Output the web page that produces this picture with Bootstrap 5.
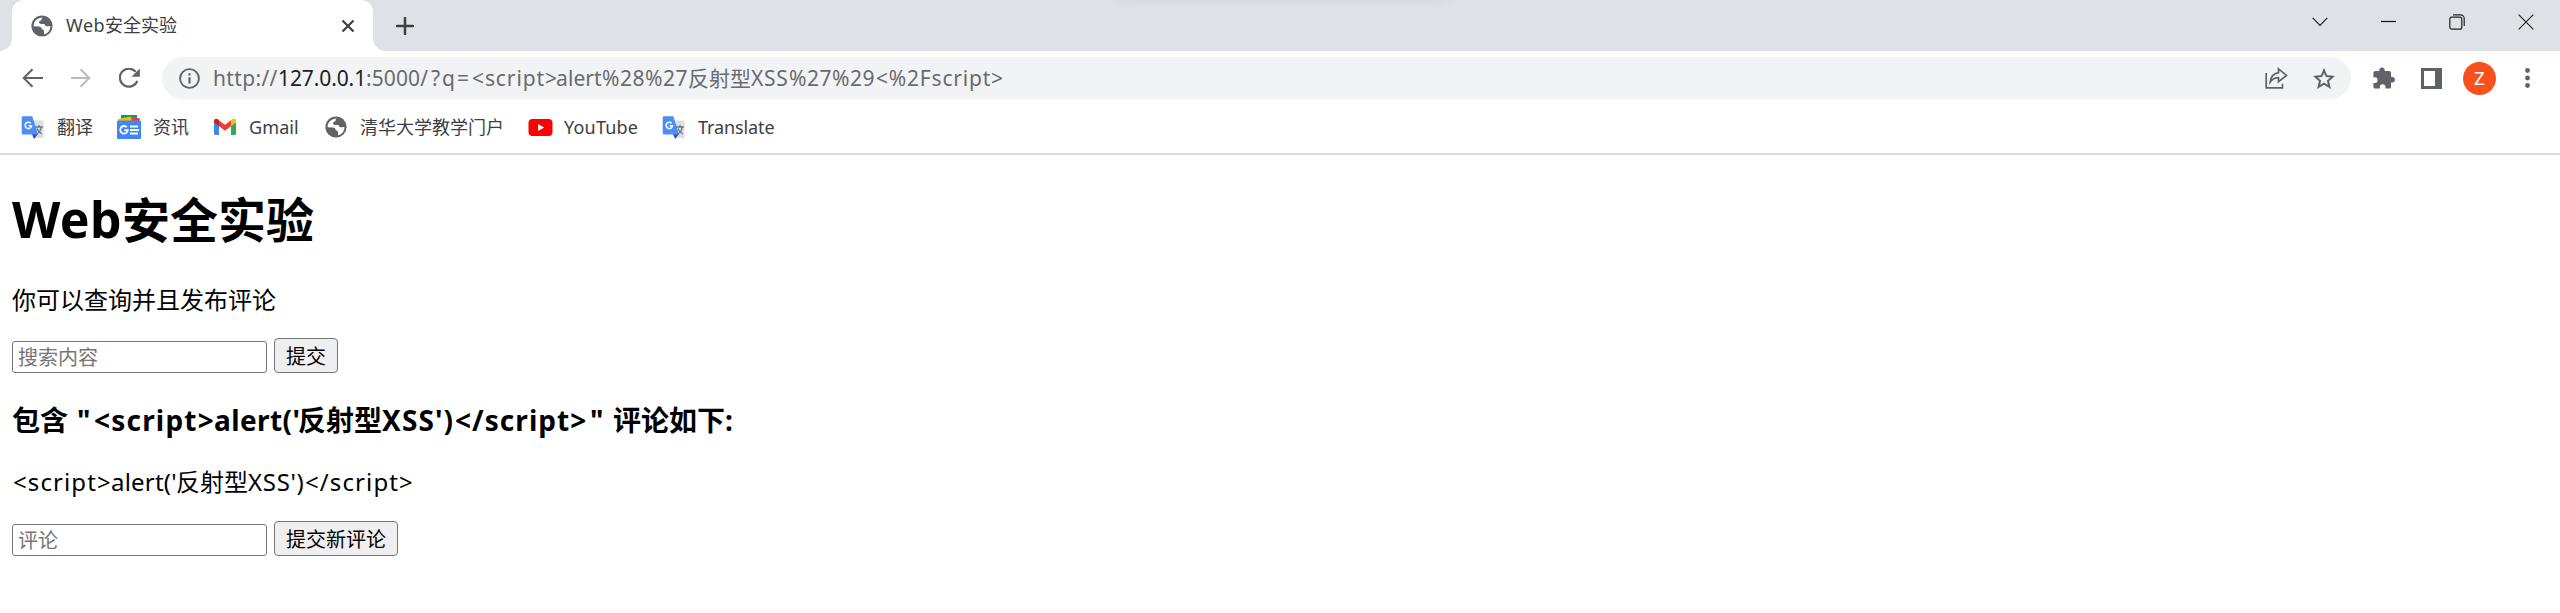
<!DOCTYPE html>
<html lang="zh-CN">
<head>
<meta charset="utf-8">
<title>Web安全实验</title>
<link href="https://cdn.jsdelivr.net/npm/bootstrap@5.3.0/dist/css/bootstrap.min.css" rel="stylesheet">
<style>
body{font-family:"Noto Sans","Noto Sans CJK SC",sans-serif;color:#000;background:#fff;height:613px;overflow:hidden}
svg{display:block;flex:none}
.tabstrip{height:51px;background:#dee1e6;position:relative}
.strip-shade{position:absolute;left:1118px;top:-14px;width:330px;height:12px;box-shadow:0 0 14px rgba(0,0,0,.08)}
.tab-page{width:361px;height:51px;margin-left:12px;padding:0 18px 0 19px;background:#fff;border-radius:12px 12px 0 0;position:relative;font-size:18px;color:#3c4043}
.tab-page::before,.tab-page::after{content:"";position:absolute;bottom:0;width:12px;height:12px}
.tab-page::before{left:-12px;background:radial-gradient(circle at 0 0,transparent 11.5px,#fff 12px)}
.tab-page::after{right:-12px;background:radial-gradient(circle at 100% 0,transparent 11.5px,#fff 12px)}
.tab-name{margin-left:13px}
.win-ctl{gap:53px;padding-right:26px;height:43px}
.toolbar{height:54px;padding:0 30px 0 22px}
.omnibox{height:42px;border-radius:21px;background:#f1f3f4;margin-left:22px;padding:0 16px 0 17px}
.address{font-size:21px;line-height:42px;color:#696b6e;margin-left:13px;white-space:pre}
.address b{font-weight:400;color:#202124}
.seg{display:inline-block;white-space:pre}
.marks{height:50px;border-bottom:2px solid #d9dadb;padding-left:21px;font-size:18px;color:#3c4043}
.marks .item{height:44px;white-space:nowrap}
.avatar{width:33px;height:33px;background:#f8511d;color:#fff;font-size:18px;line-height:33px;font-family:Roboto,sans-serif}
.page{padding:0 12px}
.page h1{font-size:48px;line-height:64px;margin:33px 0 0;font-weight:700;white-space:pre}
.page p{font-size:24px;line-height:32px;margin:0;white-space:pre}
.page h3{font-size:28px;line-height:38px;margin:0;font-weight:700;white-space:pre}
.entry{width:255px;height:32px;border:1px solid #767676;border-radius:3px;padding:0 5px;font-size:20px;line-height:28px;color:#000;background:#fff;outline:0}
.entry::placeholder{color:#757575;opacity:1}
.push{height:35px;border:1px solid #767676;border-radius:4px;background:#efefef;font-size:20px;line-height:36px;padding:0;color:#000;margin-left:7px}
</style>
</head>
<body>
<svg width="0" height="0" class="position-absolute">
<symbol id="globe" viewBox="0 0 22 22"><circle cx="11" cy="11" r="10.6" fill="#5f6368"/><path d="M12 2.6c-1.4.7-1.7 1.4-1.4 2.6-1.8.2-2.8.9-2.5 2.4.2.9 1 1.400 2.300 1.300h3.100c.5 1.700 1.300 2.400 3 2.300l2.900-.2c.1 4-2.300 7-5.800 8.200-.3.1-.6 0-.6-.400v-2c0-1.500-.6-2.300-2.200-2.600-.3-1.800-1.200-2.700-3-2.800L2.600 11.200C2.500 6.300 6.500 2.500 12 2.600z" fill="#fff"/><path d="M3 12.500l3.700 2.800v2c0 .9.8 1.200 2 1.500v.9C5.400 19 3 16 3 12.500z" fill="#5f6368"/></symbol>
<symbol id="gtrans" viewBox="0 0 22 23"><path d="M8 4.500h13a1 1 0 0 1 1 1V21a1 1 0 0 1-1 1H12z" fill="#dcdee0"/><path d="M13.500 11h8M17.500 9v2M15 18.500c2.500-1.500 4.200-4 4.700-7.300M15.500 12.500c.8 2.400 2.500 4.300 4.800 5.500" stroke="#607d8b" stroke-width="1.300" fill="none"/><path d="M10.500 18h6l-4 5z" fill="#3949ab"/><path d="M1.500.3h9.300L16.500 18.500h-15A1.300 1.300 0 0 1 .2 17.200V1.600A1.300 1.300 0 0 1 1.500.3z" fill="#4d8df6"/><path d="M9.200 7.200A3.200 3.200 0 1 0 10 9.700H7" stroke="#fff" stroke-width="1.500" fill="none"/></symbol>
</svg>

<header>
<div class="tabstrip d-flex">
  <div class="strip-shade"></div>
  <div class="tab-page d-flex align-items-center">
    <svg width="22" height="22"><use href="#globe"/></svg>
    <span class="tab-name"><span class="seg" style="width:39px;letter-spacing:.5px">Web</span>安全实验</span>
    <svg class="ms-auto" width="14" height="14" viewBox="0 0 14 14"><path d="M1.500 1.500l11 11M12.500 1.500l-11 11" stroke="#3c4043" stroke-width="2.200"/></svg>
  </div>
  <svg class="align-self-center" style="margin-left:23px" width="18" height="18" viewBox="0 0 18 18"><path d="M9 1v16M1 9h16" stroke="#3c4043" stroke-width="2.500" stroke-linecap="round"/></svg>
  <div class="win-ctl d-flex align-items-center ms-auto">
    <svg width="16" height="10" viewBox="0 0 16 10"><path d="M.7.8L8 8.500 15.300.8" stroke="#222" stroke-width="1.200" fill="none"/></svg>
    <svg width="15" height="3"><path d="M0 1.500h15" stroke="#111" stroke-width="1.200"/></svg>
    <svg width="16" height="16" viewBox="0 0 16 16"><rect x=".8" y="3.200" width="12" height="12" rx="2" fill="none" stroke="#222" stroke-width="1.200"/><path d="M4 .8h7.500a3.700 3.700 0 0 1 3.700 3.700V12" fill="none" stroke="#222" stroke-width="1.200"/></svg>
    <svg width="16" height="16" viewBox="0 0 16 16"><path d="M.7.7l14.600 14.600M15.300.7L.7 15.300" stroke="#222" stroke-width="1.200"/></svg>
  </div>
</div>

<div class="toolbar d-flex align-items-center">
  <svg width="22" height="20" viewBox="0 0 22 20"><path d="M21 10H2.500M10.500 1.200L1.700 10l8.800 8.800" stroke="#5f6368" stroke-width="2" fill="none"/></svg>
  <svg style="margin-left:27px" width="20" height="20" viewBox="0 0 20 20"><path d="M0 10h18M9.500 1.200l8.800 8.800-8.800 8.800" stroke="#babcbe" stroke-width="2" fill="none"/></svg>
  <svg style="margin-left:28px" width="21" height="20" viewBox="0 0 21 20"><path d="M18.300 12.800a9 9 0 1 1-1.600-9" stroke="#5f6368" stroke-width="2.200" fill="none"/><path d="M20.800.4v8.300h-8.300z" fill="#5f6368"/></svg>
  <div class="omnibox d-flex align-items-center flex-grow-1">
    <svg width="21" height="21" viewBox="0 0 21 21"><circle cx="10.500" cy="10.500" r="9.400" stroke="#5f6368" stroke-width="1.900" fill="none"/><path d="M10.500 9.200v6.300M10.500 5.300v2.300" stroke="#5f6368" stroke-width="2.200"/></svg>
    <div class="address"><span class="seg" style="width:65px;letter-spacing:.35px">http://</span><b class="seg" style="width:88px;letter-spacing:-.1px">127.0.0.1</b><span class="seg" style="width:65px;letter-spacing:.1px">:5000/</span><span class="seg" style="width:41px;letter-spacing:2px">?q=</span><span class="seg" style="width:84px;letter-spacing:.9px">&lt;script&gt;</span><span class="seg" style="width:46px;letter-spacing:.1px">alert</span><span class="seg" style="width:86px;letter-spacing:.5px">%28%27</span>反射型<span class="seg" style="width:38px;letter-spacing:.7px">XSS</span><span class="seg" style="width:86px;letter-spacing:.5px">%27%29</span><span class="seg" style="width:129px;letter-spacing:.8px;text-indent:1px">&lt;%2Fscript&gt;</span></div>
    <svg class="ms-auto" width="23" height="22" viewBox="0 0 23 22"><path d="M1.200 6v14.800h16.300v-4" stroke="#5f6368" stroke-width="1.700" fill="none"/><path d="M13.500 1.800l8 6.600-8 6.300v-4c-4 0-6.200 1.300-8.300 4.300.5-5.200 3.200-8.400 8.300-9.300z" stroke="#5f6368" stroke-width="1.700" fill="none"/></svg>
    <svg style="margin-left:25px" width="22" height="21" viewBox="0 0 22 21"><path d="M11 2.500l2.500 5.600 6.200.6-4.700 4.100 1.400 6.100L11 15.700l-5.400 3.200L7 12.800 2.300 8.700l6.200-.6z" stroke="#5f6368" stroke-width="2" fill="none"/></svg>
  </div>
  <svg style="margin-left:22px" width="22" height="22" viewBox="0 0 22 22"><path d="M2 4h4.300v-.8a2.700 2.700 0 0 1 5.400 0V4H16a2 2 0 0 1 2 2v4h1.200a2.700 2.700 0 0 1 0 5.400H18V20a1.600 1.600 0 0 1-1.600 1.600h-4V20a2.800 2.800 0 0 0-5.600 0v1.600H2A1.700 1.700 0 0 1 .4 20v-4h1.300a2.900 2.900 0 0 0 0-5.800H.4V6A2 2 0 0 1 2 4z" fill="#5f6368"/></svg>
  <svg style="margin-left:26px" width="21" height="21" viewBox="0 0 21 21"><path fill-rule="evenodd" d="M0 0h21v21H0zM3 3v15h11V3z" fill="#5f6368"/></svg>
  <div class="avatar rounded-circle text-center" style="margin-left:21px">Z</div>
  <svg style="margin-left:29px" width="5" height="20" viewBox="0 0 5 20"><g fill="#5f6368"><circle cx="2.500" cy="2.500" r="2.400"/><circle cx="2.500" cy="10" r="2.400"/><circle cx="2.500" cy="17.500" r="2.400"/></g></svg>
</div>

<nav class="marks d-flex">
  <div class="item d-flex align-items-center" style="width:96px"><svg width="23" height="23"><use href="#gtrans"/></svg><span style="margin-left:13px">翻译</span></div>
  <div class="item d-flex align-items-center" style="width:96px"><svg width="24" height="24" viewBox="0 0 24 24"><path d="M4 0h16v8H4z" fill="#0f9d58"/><path d="M14 1.500l9 2-1 4h-9z" fill="#ea4335"/><path d="M1 4l13-2.500L15 8H2z" fill="#fbbc04"/><rect y="5.500" width="24" height="18.500" rx="1" fill="#4285f4"/><path d="M9.800 12.200a3.800 3.800 0 1 0 1 3H7.200" stroke="#fff" stroke-width="1.800" fill="none"/><path d="M13 11.500h8M13 15h9M13 18.500h8" stroke="#fff" stroke-width="1.800" fill="none"/></svg><span style="margin-left:12px">资讯</span></div>
  <div class="item d-flex align-items-center" style="width:112px"><svg width="24" height="18" viewBox="0 0 24 18"><path d="M1 3h5v14H2.500A1.500 1.500 0 0 1 1 15.500z" fill="#4285f4"/><path d="M18 3h5v12.500a1.500 1.500 0 0 1-1.500 1.500H18z" fill="#34a853"/><path d="M6 2.200l6 4.500 6-4.500v6l-6 4.500-6-4.500z" fill="#ea4335"/><path d="M1 3C1 .6 3.500-.1 5.300 1.500L6 2.200v6L1 4.500z" fill="#c5221f"/><path d="M23 3c0-2.400-2.500-3.100-4.300-1.500l-.7.7v6l5-3.700z" fill="#fbbc04"/></svg><span style="margin-left:12px;letter-spacing:.1px">Gmail</span></div>
  <div class="item d-flex align-items-center" style="width:203px"><svg width="22" height="22"><use href="#globe"/></svg><span style="margin-left:13px">清华大学教学门户</span></div>
  <div class="item d-flex align-items-center" style="width:134px"><svg width="25" height="17" viewBox="0 0 25 17"><rect x=".5" width="24" height="17" rx="4" fill="#f00"/><path d="M10 5v7l6.200-3.500z" fill="#fff"/></svg><span style="margin-left:11px;letter-spacing:.2px">YouTube</span></div>
  <div class="item d-flex align-items-center"><svg width="23" height="23"><use href="#gtrans"/></svg><span style="margin-left:13px;letter-spacing:-.1px">Translate</span></div>
</nav>
</header>

<main class="page">
  <h1><span class="seg" style="width:110px;font-size:50px;letter-spacing:.4px;line-height:60px">Web</span>安全实验</h1>
  <p style="margin-top:32px">你可以查询并且发布评论</p>
  <form class="d-flex align-items-end" style="margin-top:22px;height:35px" onsubmit="return false"><input class="entry" placeholder="搜索内容"><button class="push" style="width:64px">提交</button></form>
  <h3 style="margin-top:28px">包含<span class="seg" style="width:26px;text-indent:9px">"</span><span class="seg" style="width:120px;letter-spacing:1.200px">&lt;script&gt;</span><span class="seg" style="width:84px;letter-spacing:.4px">alert('</span>反射型<span class="seg" style="width:73px;letter-spacing:1.100px">XSS')</span><span class="seg" style="width:135px;letter-spacing:1.050px">&lt;/script&gt;</span><span class="seg" style="width:23px">"</span>评论如下:</h3>
  <p style="margin-top:27px"><span class="seg" style="width:99px;letter-spacing:1.100px;text-indent:1px">&lt;script&gt;</span><span class="seg" style="width:65px;letter-spacing:.2px">alert('</span>反射型<span class="seg" style="width:57px;letter-spacing:.7px">XSS')</span><span class="seg" style="width:108px;letter-spacing:1.100px">&lt;/script&gt;</span></p>
  <form class="d-flex align-items-end" style="margin-top:23px;height:35px" onsubmit="return false"><input class="entry" placeholder="评论"><button class="push" style="width:124px">提交新评论</button></form>
</main>
<script src="https://cdn.jsdelivr.net/npm/bootstrap@5.3.0/dist/js/bootstrap.bundle.min.js"></script>
</body>
</html>
